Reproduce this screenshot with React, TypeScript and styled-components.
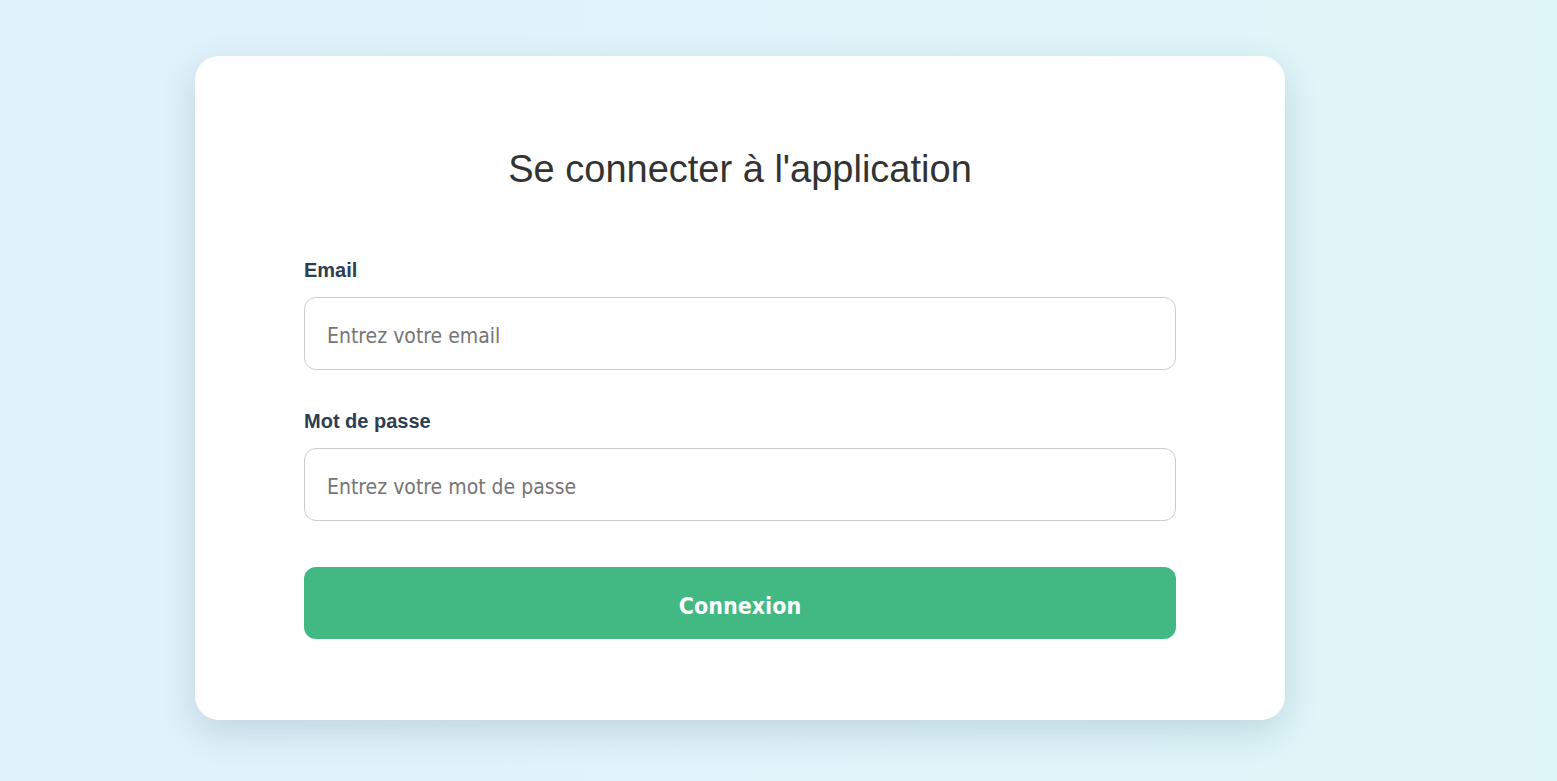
import styled, { createGlobalStyle } from "styled-components";

const GlobalStyle = createGlobalStyle`
  * {
    box-sizing: border-box;
  }
  body {
    margin: 0;
    font-family: "Liberation Sans", Arial, sans-serif;
    background: linear-gradient(90deg, #e0f2fc 0%, #e0f4fa 50%, #dff6f8 100%);
    min-height: 100vh;
  }
`;

const Page = styled.main`
  min-height: 100vh;
  padding: 56px 0 0 195px;
`;

const Card = styled.div`
  width: 1090px;
  padding: 91px 109px 81px;
  background: #fff;
  border-radius: 24px;
  box-shadow: 0 12px 36px rgba(20, 60, 80, 0.16);
`;

const Title = styled.h1`
  margin: 0 0 68px;
  font-size: 38px;
  line-height: 44px;
  font-weight: 400;
  color: #333;
  text-align: center;
`;

const Form = styled.form`
  display: flex;
  flex-direction: column;
`;

const Field = styled.div<{ last?: boolean }>`
  display: flex;
  flex-direction: column;
  margin-bottom: ${(p) => (p.last ? "46px" : "40px")};
`;

const Label = styled.label`
  margin-bottom: 15px;
  font-size: 20px;
  line-height: 23px;
  font-weight: 700;
  color: #2c3e50;
`;

const Input = styled.input`
  height: 73px;
  padding: 5px 22px 0;
  border: 1px solid #ccc;
  border-radius: 12px;
  font-family: "DejaVu Sans Condensed", "DejaVu Sans", sans-serif;
  font-stretch: condensed;
  font-size: 21px;
  color: #333;
  outline: none;
  &::placeholder {
    color: #757575;
  }
`;

const Button = styled.button`
  height: 72px;
  padding: 5px 0 0;
  border: none;
  border-radius: 12px;
  background: #42b983;
  color: #fff;
  font-family: "DejaVu Sans Condensed", "DejaVu Sans", sans-serif;
  font-stretch: condensed;
  font-weight: 700;
  font-size: 23px;
  cursor: pointer;
`;

export default function App() {
  return (
    <>
      <GlobalStyle />
      <Page>
        <Card>
          <Title>Se connecter à l'application</Title>
          <Form onSubmit={(e) => e.preventDefault()}>
            <Field>
              <Label htmlFor="email">Email</Label>
              <Input id="email" type="email" placeholder="Entrez votre email" />
            </Field>
            <Field last>
              <Label htmlFor="password">Mot de passe</Label>
              <Input
                id="password"
                type="password"
                placeholder="Entrez votre mot de passe"
              />
            </Field>
            <Button type="submit">Connexion</Button>
          </Form>
        </Card>
      </Page>
    </>
  );
}
